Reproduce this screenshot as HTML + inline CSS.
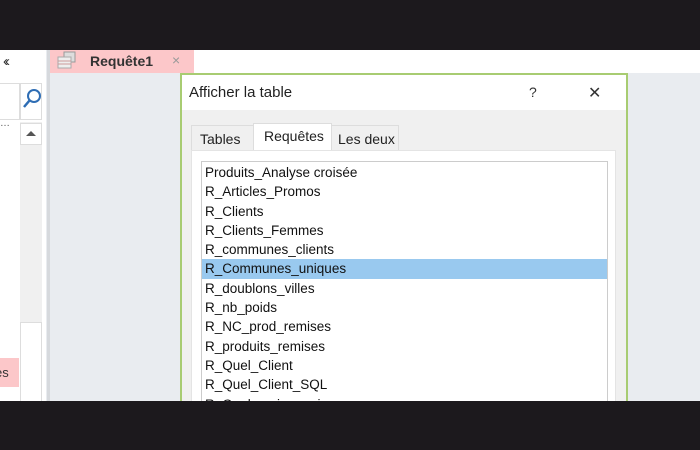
<!DOCTYPE html>
<html><head><meta charset="utf-8"><style>
*{margin:0;padding:0;box-sizing:border-box}
body{width:700px;height:450px;overflow:hidden;background:#1c191d;font-family:"Liberation Sans","DejaVu Sans",sans-serif;position:relative}
.a{position:absolute}
.list div{height:19.3px;line-height:19px;padding-left:3px;font-size:13.5px;color:#111;white-space:nowrap}
</style></head><body>
<div class="a" style="left:0;top:50px;width:700px;height:351px;background:#e9ecf0;overflow:hidden">
  <div class="a" style="left:0;top:0;width:46px;height:351px;background:#fff"></div>
  <div class="a" style="left:3px;top:3px;font-size:15px;color:#333;letter-spacing:-3px">‹‹</div>
  <div class="a" style="left:0;top:33px;width:20px;height:37px;border:1px solid #ddd;border-left:none;background:#fff"></div>
  <div class="a" style="left:20px;top:33px;width:22px;height:37px;border:1px solid #ddd;background:#fff">
    <svg width="22" height="30" viewBox="0 0 22 30"><circle cx="13" cy="12" r="6" fill="none" stroke="#2e6db4" stroke-width="2"/><line x1="8.5" y1="16.5" x2="3" y2="23" stroke="#2e6db4" stroke-width="2.5"/></svg>
  </div>
  <div class="a" style="left:0;top:68px;font-size:10px;color:#555">…</div>
  <div class="a" style="left:20px;top:72px;width:22px;height:280px;background:#f0f0f0"></div>
  <div class="a" style="left:20px;top:73px;width:22px;height:22px;background:#fff;border:1px solid #ddd"><div class="a" style="left:5px;top:7px;width:0;height:0;border-left:5px solid transparent;border-right:5px solid transparent;border-bottom:5px solid #555"></div></div>
  <div class="a" style="left:20px;top:272px;width:22px;height:80px;background:#fff;border:1px solid #ddd"></div>
  <div class="a" style="left:0;top:308px;width:19px;height:29px;background:#fcc7c9;font-size:13px;line-height:29px;color:#333;text-indent:-5px">es</div>
  <div class="a" style="left:47px;top:0;width:3px;height:351px;background:#d6d9dd"></div>
  <div class="a" style="left:50px;top:0;width:650px;height:23px;background:#fff"></div>
  <div class="a" style="left:50px;top:0;width:144px;height:23px;background:#fcc7c9">
    <svg class="a" style="left:7px;top:1px" width="24" height="20"><rect x="7" y="1" width="11" height="10" fill="#ddd" stroke="#999"/><rect x="1" y="6" width="13" height="11" fill="#eee" stroke="#aaa"/><line x1="1" y1="10" x2="14" y2="10" stroke="#c99"/><line x1="1" y1="13" x2="14" y2="13" stroke="#c99"/></svg>
    <div class="a" style="left:40px;top:3px;font-size:14px;font-weight:bold;color:#333">Requête1</div>
    <div class="a" style="left:122px;top:2px;font-size:14px;color:#999">×</div>
  </div>
  <div class="a" style="left:180px;top:23px;width:448px;height:340px;background:#a8cc72;padding:2px 2px 0 2px">
    <div style="background:#f0f0f0;width:444px;height:340px;position:relative">
      <div class="a" style="left:0;top:0;width:444px;height:35px;background:#fff"></div>
      <div class="a" style="left:7px;top:9px;font-size:15px;color:#222">Afficher la table</div>
      <div class="a" style="left:347px;top:9px;font-size:14px;color:#333">?</div>
      <div class="a" style="left:406px;top:8px;font-size:16px;color:#333">✕</div>
      <div class="a" style="left:9px;top:50px;width:63px;height:25px;border:1px solid #ddd;border-bottom:none;background:#f0f0f0;font-size:14px;padding:5px 0 0 8px;color:#222">Tables</div>
      <div class="a" style="left:149px;top:50px;width:68px;height:25px;border:1px solid #ddd;border-bottom:none;background:#f0f0f0;font-size:14px;padding:5px 0 0 6px;color:#222">Les deux</div>
      <div class="a" style="left:71px;top:48px;width:79px;height:29px;border:1px solid #ddd;border-bottom:none;background:#fff;font-size:14px;padding:4px 0 0 10px;color:#222">Requêtes</div>
      <div class="a" style="left:9px;top:75px;width:425px;height:280px;background:#fff;border:1px solid #e4e4e4"></div>
      <div class="a list" style="left:19px;top:86px;width:407px;height:260px;border:1px solid #ccc;background:#fff;padding-top:1px;overflow:hidden">
        <div>Produits_Analyse croisée</div>
        <div>R_Articles_Promos</div>
        <div>R_Clients</div>
        <div>R_Clients_Femmes</div>
        <div>R_communes_clients</div>
        <div style="background:#99c9ef">R_Communes_uniques</div>
        <div>R_doublons_villes</div>
        <div>R_nb_poids</div>
        <div>R_NC_prod_remises</div>
        <div>R_produits_remises</div>
        <div>R_Quel_Client</div>
        <div>R_Quel_Client_SQL</div>
        <div>R_Quel_mois_remise</div>
      </div>
    </div>
  </div>
</div>
</body></html>
